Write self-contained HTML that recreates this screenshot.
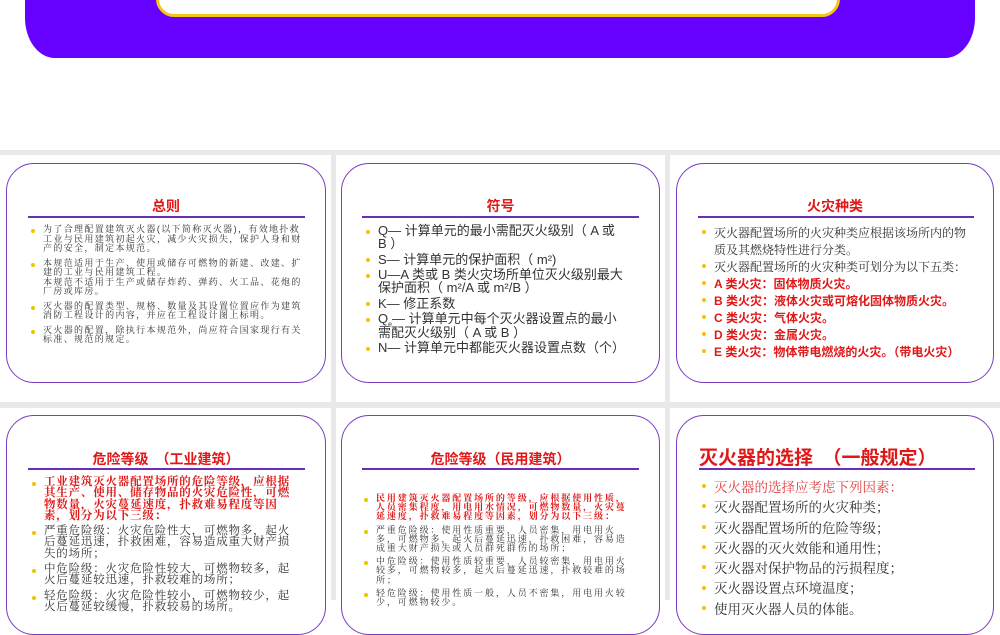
<!DOCTYPE html>
<html><head><meta charset="utf-8"><style>
*{margin:0;padding:0;box-sizing:border-box}
body{width:1000px;height:600px;overflow:hidden;background:#fff;position:relative;font-family:"Liberation Sans","Noto Serif CJK SC","Noto Sans CJK SC",serif}
.abs{position:absolute}
.banner{left:25px;top:-30px;width:950px;height:88px;background:#6600ff;border-radius:0 0 30px 30px/0 0 40px 40px}
.inner{left:156px;top:-30px;width:684px;height:47px;background:#fff;border:3px solid #f5c518;border-radius:0 0 18px 18px}
.gray{background:#e9e9e9}
.card{border:1.5px solid #7a3cc0;border-radius:28px;background:#fff}
.title{color:#e01818;font-weight:bold;font-family:"Liberation Sans","Noto Sans CJK SC",sans-serif;text-align:center}
.rule{height:2px;background:#6a2fb8}
ul{list-style:none}
li{position:relative;padding-left:14px;color:#333}
li:before{content:"";position:absolute;left:2px;width:4px;height:4px;border-radius:50%;background:#f3c300}
.sans{font-family:"Liberation Sans","Noto Sans CJK SC",sans-serif}
.red{color:#e01818}
</style></head><body>
<div class="abs banner"></div>
<div class="abs inner"></div>

<div class="abs gray" style="left:0;top:150px;width:1000px;height:5px"></div>
<div class="abs gray" style="left:0;top:402px;width:1000px;height:6px"></div>
<div class="abs gray" style="left:331px;top:150px;width:5px;height:450px"></div>
<div class="abs gray" style="left:665px;top:150px;width:5px;height:450px"></div>

<!-- Slide 1 -->
<div class="abs card" style="left:6px;top:163px;width:320px;height:220px"></div>
<div class="abs title" style="left:6px;top:196px;width:320px;font-size:14px">总则</div>
<div class="abs rule" style="left:28px;top:216px;width:277px;height:1.5px"></div>
<ul class="abs" style="left:29px;top:225px;width:278px;font-size:9px;line-height:9.5px;letter-spacing:1.35px">
<li style="margin-bottom:5px">为了合理配置建筑灭火器(以下简称灭火器)，有效地扑救工业与民用建筑初起火灾，减少火灾损失，保护人身和财产的安全，制定本规范。</li>
<li style="margin-bottom:5px">本规范适用于生产、使用或储存可燃物的新建、改建、扩建的工业与民用建筑工程。<br>本规范不适用于生产或储存炸药、弹药、火工品、花炮的厂房或库房。</li>
<li style="margin-bottom:5px">灭火器的配置类型、规格、数量及其设置位置应作为建筑消防工程设计的内容，并应在工程设计图上标明。</li>
<li>灭火器的配置，除执行本规范外，尚应符合国家现行有关标准、规范的规定。</li>
</ul>

<!-- Slide 2 -->
<div class="abs card" style="left:341px;top:163px;width:319px;height:220px"></div>
<div class="abs title" style="left:341px;top:196px;width:319px;font-size:14px">符号</div>
<div class="abs rule" style="left:362px;top:216px;width:277px;height:1.5px"></div>
<ul class="abs sans" style="left:364px;top:224px;width:262px;font-size:13px;line-height:13px">
<li style="margin-bottom:2.5px">Q— 计算单元的最小需配灭火级别（ A 或 B ）</li>
<li style="margin-bottom:2.5px">S— 计算单元的保护面积（ m²)</li>
<li style="margin-bottom:2.5px">U—A 类或 B 类火灾场所单位灭火级别最大保护面积（ m²/A 或 m²/B ）</li>
<li style="margin-bottom:2.5px">K— 修正系数</li>
<li style="margin-bottom:2.5px">Q<sub style="font-size:7px;line-height:0">e</sub>— 计算单元中每个灭火器设置点的最小需配灭火级别（ A 或 B ）</li>
<li>N— 计算单元中都能灭火器设置点数（个）</li>
</ul>

<!-- Slide 3 -->
<div class="abs card" style="left:676px;top:163px;width:318px;height:220px"></div>
<div class="abs title" style="left:676px;top:196px;width:318px;font-size:14px">火灾种类</div>
<div class="abs rule" style="left:698px;top:216px;width:276px;height:1.5px"></div>
<ul class="abs" style="left:700px;top:225px;width:272px;font-size:12px;line-height:17px">
<li>灭火器配置场所的火灾种类应根据该场所内的物质及其燃烧特性进行分类。</li>
<li>灭火器配置场所的火灾种类可划分为以下五类：</li>
<li class="red sans" style="font-weight:bold">A 类火灾：固体物质火灾。</li>
<li class="red sans" style="font-weight:bold">B 类火灾：液体火灾或可熔化固体物质火灾。</li>
<li class="red sans" style="font-weight:bold">C 类火灾：气体火灾。</li>
<li class="red sans" style="font-weight:bold">D 类火灾：金属火灾。</li>
<li class="red sans" style="font-weight:bold">E 类火灾：物体带电燃烧的火灾。（带电火灾）</li>
</ul>

<!-- Slide 4 -->
<div class="abs card" style="left:6px;top:415px;width:320px;height:220px"></div>
<div class="abs title" style="left:6px;top:449px;width:320px;font-size:14px">危险等级　（工业建筑）</div>
<div class="abs rule" style="left:28px;top:468px;width:277px;height:1.5px"></div>
<ul class="abs" style="left:30px;top:477px;width:268px;font-size:11.5px;line-height:11.3px;letter-spacing:0.8px">
<li class="red" style="font-weight:bold;margin-bottom:4px">工业建筑灭火器配置场所的危险等级，应根据其生产、使用、储存物品的火灾危险性，可燃物数量，火灾蔓延速度，扑救难易程度等因素，划分为以下三级：</li>
<li style="margin-bottom:4px">严重危险级：火灾危险性大，可燃物多，起火后蔓延迅速，扑救困难，容易造成重大财产损失的场所；</li>
<li style="margin-bottom:4px">中危险级：火灾危险性较大，可燃物较多，起火后蔓延较迅速，扑救较难的场所；</li>
<li>轻危险级：火灾危险性较小，可燃物较少，起火后蔓延较缓慢，扑救较易的场所。</li>
</ul>

<!-- Slide 5 -->
<div class="abs card" style="left:341px;top:415px;width:319px;height:220px"></div>
<div class="abs title" style="left:341px;top:449px;width:319px;font-size:14px">危险等级（民用建筑）</div>
<div class="abs rule" style="left:362px;top:468px;width:277px;height:1.5px"></div>
<ul class="abs" style="left:362px;top:494px;width:272px;font-size:9px;line-height:9.2px;letter-spacing:1.9px">
<li class="red" style="font-weight:bold;margin-bottom:4px">民用建筑灭火器配置场所的等级，应根据使用性质，人员密集程度，用电用水情况，可燃物数量，火灾蔓延速度，扑救难易程度等因素，划分为以下三级：</li>
<li style="margin-bottom:4px">严重危险级：使用性质重要，人员密集，用电用火多，可燃物多，起火后蔓延迅速，扑救困难，容易造成重大财产损失或人员群死群伤的场所；</li>
<li style="margin-bottom:4px">中危险级：使用性质较重要，人员较密集，用电用火较多，可燃物较多，起火后蔓延迅速，扑救较难的场所；</li>
<li>轻危险级：使用性质一般，人员不密集，用电用火较少，可燃物较少。</li>
</ul>

<!-- Slide 6 -->
<div class="abs card" style="left:676px;top:415px;width:318px;height:220px"></div>
<div class="abs title" style="left:699px;top:443px;font-size:19px;text-align:left">灭火器的选择　（一般规定）</div>
<div class="abs rule" style="left:699px;top:468px;width:276px;height:1.5px"></div>
<ul class="abs" style="left:700px;top:478px;width:285px;font-size:13.5px;line-height:20.3px">
<li style="color:#e04040">灭火器的选择应考虑下列因素：</li>
<li>灭火器配置场所的火灾种类；</li>
<li>灭火器配置场所的危险等级；</li>
<li>灭火器的灭火效能和通用性；</li>
<li>灭火器对保护物品的污损程度；</li>
<li>灭火器设置点环境温度；</li>
<li>使用灭火器人员的体能。</li>
</ul>
<style>li:before{top:0.45em}</style>
</body></html>
